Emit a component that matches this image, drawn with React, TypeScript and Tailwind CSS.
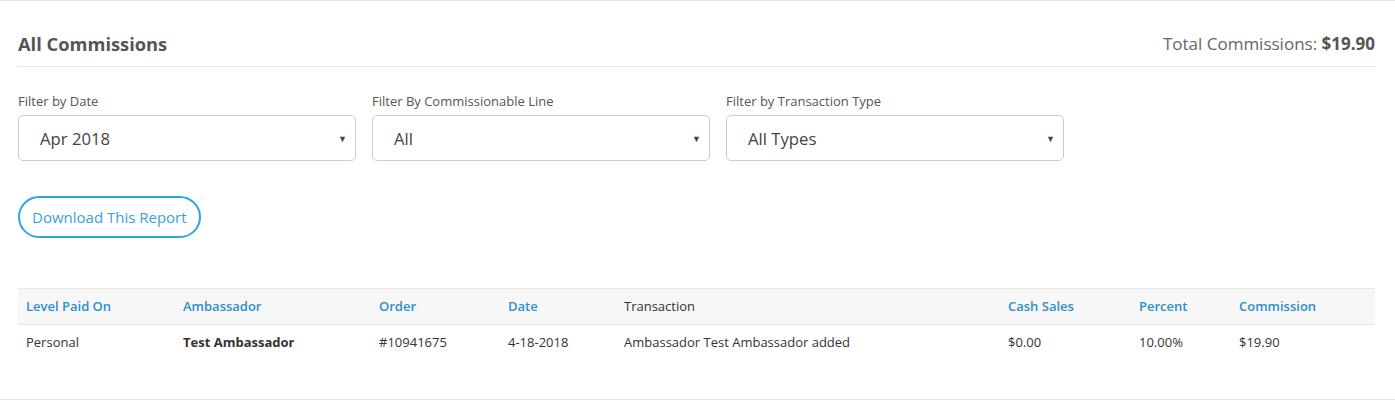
const FILTERS = [
  { label: "Filter by Date", value: "Apr 2018" },
  { label: "Filter By Commissionable Line", value: "All" },
  { label: "Filter by Transaction Type", value: "All Types" },
];

const COLUMNS = [
  { label: "Level Paid On", w: "w-[157px]", blue: true },
  { label: "Ambassador", w: "w-[196px]", blue: true },
  { label: "Order", w: "w-[129px]", blue: true },
  { label: "Date", w: "w-[116px]", blue: true },
  { label: "Transaction", w: "w-[384px]", blue: false },
  { label: "Cash Sales", w: "w-[131px]", blue: true },
  { label: "Percent", w: "w-[100px]", blue: true },
  { label: "Commission", w: "", blue: true },
];

const ROWS = [
  {
    level: "Personal",
    ambassador: "Test Ambassador",
    order: "#10941675",
    date: "4-18-2018",
    transaction: "Ambassador Test Ambassador added",
    cash: "$0.00",
    percent: "10.00%",
    commission: "$19.90",
  },
];

export default function App() {
  return (
    <div className="min-h-[401px] bg-white font-['Open_Sans',sans-serif]">
      <div className="h-[400px] border-y border-[#e3e3e3] pl-[18px] pr-[20px] pt-[29px]">
        {/* Header */}
        <div className="flex items-center justify-between border-b border-[#e5e5e5] pb-[9px]">
          <h2 className="text-[18.3px] font-bold text-[#555]">All Commissions</h2>
          <p className="text-[17px] text-[#666]">
            Total Commissions: <span className="font-bold text-[#555]">$19.90</span>
          </p>
        </div>

        {/* Filters */}
        <div className="mt-[25px] flex gap-4">
          {FILTERS.map((f) => (
            <div key={f.label} className="w-[338px]">
              <p className="text-[13px] leading-[18px] text-[#555]">{f.label}</p>
              <div className="mt-[5px] flex h-[46px] items-center justify-between rounded-[5px] border border-[#ccc] pl-[21px] pr-[8px]">
                <span className="text-[16.7px] text-[#444]">{f.value}</span>
                <span className="text-[9px] text-[#444]">▼</span>
              </div>
            </div>
          ))}
        </div>

        {/* Download */}
        <button className="mt-[35px] h-[42px] rounded-full border-2 border-[#2aa7df] px-[12px] text-[15px] text-[#3b9fd9]">
          Download This Report
        </button>

        {/* Table */}
        <table className="mt-[50px] w-full border-collapse text-[13px]">
          <thead>
            <tr className="h-[36px] border-y border-[#e6e6e6] bg-[#f7f7f7]">
              {COLUMNS.map((c) => (
                <th
                  key={c.label}
                  className={
                    "px-2 text-left " +
                    c.w +
                    " " +
                    (c.blue ? "font-semibold text-[#2b8fd0]" : "font-normal text-[#333]")
                  }
                >
                  {c.label}
                </th>
              ))}
            </tr>
          </thead>
          <tbody>
            {ROWS.map((r) => (
              <tr key={r.order} className="h-[36px] text-[#333]">
                <td className="px-2">{r.level}</td>
                <td className="px-2 font-bold">{r.ambassador}</td>
                <td className="px-2">{r.order}</td>
                <td className="px-2">{r.date}</td>
                <td className="px-2">{r.transaction}</td>
                <td className="px-2">{r.cash}</td>
                <td className="px-2">{r.percent}</td>
                <td className="px-2">{r.commission}</td>
              </tr>
            ))}
          </tbody>
        </table>
      </div>
    </div>
  );
}
